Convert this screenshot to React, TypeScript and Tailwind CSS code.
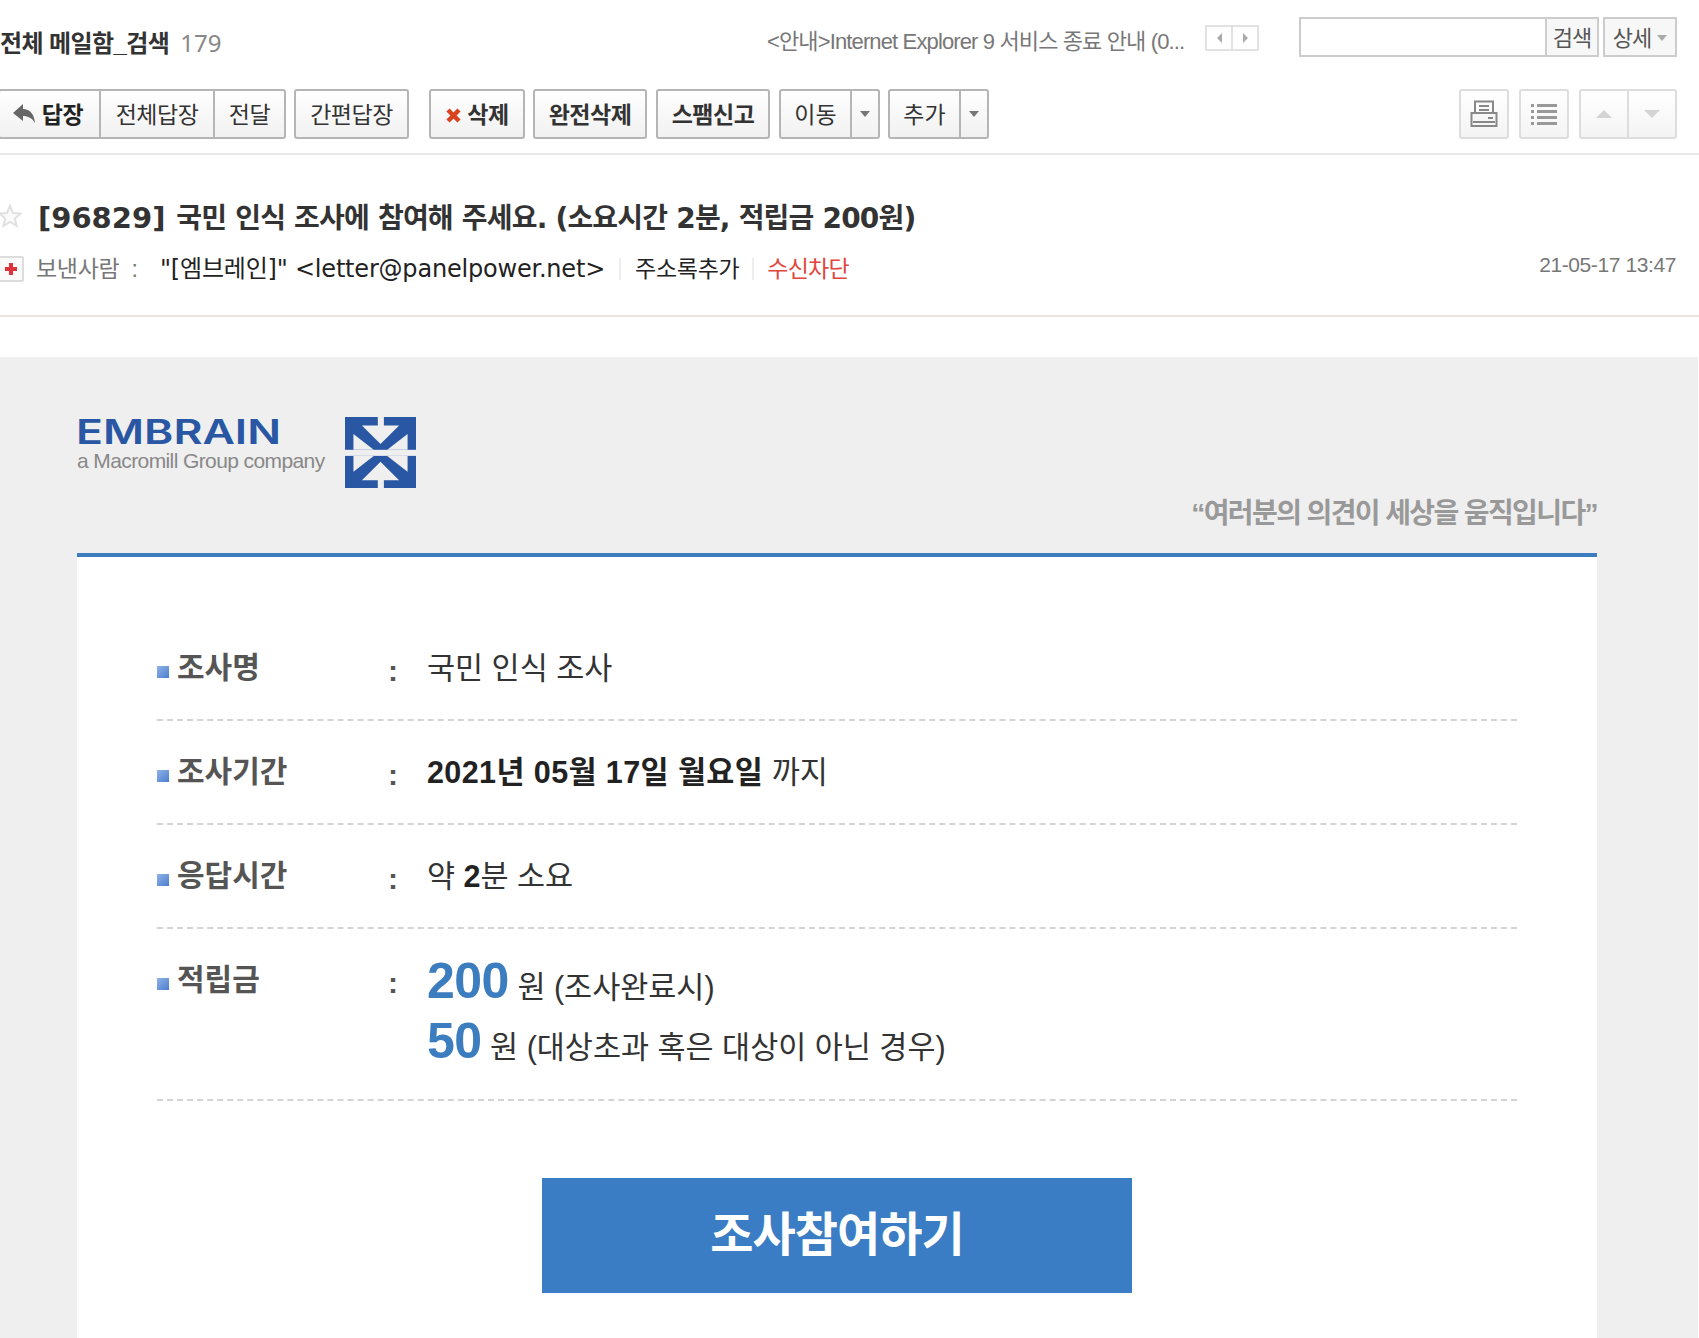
import React from 'react';

const sans = "font-['Liberation_Sans','Noto_Sans_CJK_KR',sans-serif]";

const Caret = ({ className = 'border-t-[#777]' }: { className?: string }) => (
  <span className={`inline-block w-0 h-0 border-x-[5px] border-x-transparent border-t-[6px] ${className}`} />
);

const ToolButton = ({ children, bold, className = '' }: { children: React.ReactNode; bold?: boolean; className?: string }) => (
  <button
    className={`h-[50px] pt-[3px] flex items-center justify-center border-2 border-[#b5b5b5] rounded-[3px] bg-gradient-to-b from-white to-[#f1f1f1] text-[23px] tracking-[-0.5px] text-[#333] ${bold ? 'font-bold text-[#222]' : ''} ${className}`}
  >
    {children}
  </button>
);

const SplitButton = ({ label, mainWidth }: { label: string; mainWidth: string }) => (
  <div className="h-[50px] flex border-2 border-[#b5b5b5] rounded-[3px] bg-gradient-to-b from-white to-[#f1f1f1] text-[23px] text-[#333]">
    <span className={`${mainWidth} pt-[3px] flex items-center justify-center border-r-2 border-[#b5b5b5]`}>{label}</span>
    <span className="w-[26px] flex items-center justify-center"><Caret /></span>
  </div>
);

const Row = ({ label, children, className = '' }: { label: string; children: React.ReactNode; className?: string }) => (
  <div className={`flex border-b-2 border-dashed border-[#d4d4d4] ${className}`}>
    <div className="w-[231px] flex items-start text-[30px] leading-[44px] font-bold text-[#555]">
      <span className="w-3 h-3 mt-[20px] mr-2 bg-gradient-to-br from-[#8fb2e6] to-[#4a7fd0]" />
      {label}
    </div>
    <div className="w-[39px] pt-[3px] text-[30px] leading-[44px] font-bold text-[#555]">:</div>
    <div className="text-[30.5px] leading-[44px] text-[#333]">{children}</div>
  </div>
);

// two mirrored halves: arrow from the edge, wedges either side
const EmbrainMark = () => (
  <svg width="71" height="71" viewBox="0 0 210 210" className="ml-[18px]">
    <rect width="210" height="210" fill="#2957a4" />
    <rect y="97" width="210" height="18" fill="#efefef" />
    <g fill="#efefef">
      <path d="M97 0h18v25h45l-55 55-55-55h47z" />
      <path d="M25 50L85 97H25z" />
      <path d="M185 50L125 97h60z" />
      <path d="M97 212h18v-25h45l-55-55-55 55h47z" />
      <path d="M25 162L85 115H25z" />
      <path d="M185 162L125 115h60z" />
    </g>
  </svg>
);

export default function App() {
  return (
    <div className={`relative w-[1699px] h-[1338px] overflow-hidden bg-white ${sans}`}>
      {/* title row */}
      <div className="h-[89px] flex items-start">
        <div className="w-[767px] pt-[25px] flex items-baseline whitespace-nowrap">
          <span className="text-[24px] font-bold tracking-[-0.6px] text-[#333]">전체 메일함_검색</span>
          <span className="ml-[11px] text-[24px] text-[#888] font-['Noto_Sans',sans-serif]">179</span>
        </div>
        <div className="w-[440px] pt-[25px] text-[22px] text-[#777] tracking-[-0.87px] whitespace-nowrap">
          {'<안내>Internet Explorer 9 서비스 종료 안내 (0...'}
        </div>
        <div className="mt-[25px] ml-[-2px] w-[54px] h-[26px] flex border-2 border-[#e2e2e2] bg-white">
          <span className="flex-1 flex items-center justify-center border-r-2 border-[#e2e2e2]">
            <span className="w-0 h-0 border-y-[5px] border-y-transparent border-r-[5px] border-r-[#aaa]" />
          </span>
          <span className="flex-1 flex items-center justify-center">
            <span className="w-0 h-0 border-y-[5px] border-y-transparent border-l-[5px] border-l-[#aaa]" />
          </span>
        </div>
        <div className="mt-[17px] ml-[40px] w-[300px] h-[40px] flex border-2 border-[#ccc]">
          <div className="w-[244px]" />
          <div className="flex-1 pt-[2px] flex items-center justify-center border-l-2 border-[#ccc] bg-[#f7f7f7] text-[22px] text-[#555] tracking-[-1px]">검색</div>
        </div>
        <div className="mt-[17px] ml-[4px] w-[74px] h-[40px] pt-[2px] flex items-center justify-center gap-[6px] border-2 border-[#ccc] bg-[#f7f7f7] text-[22px] text-[#555] tracking-[-1px]">
          상세 <Caret className="border-t-[#aaa]" />
        </div>
      </div>

      {/* toolbar */}
      <div className="h-[66px] flex items-start border-b-2 border-[#e8e8e8]">
        <div className="ml-[-2px] w-[288px] h-[50px] flex border-2 border-[#b5b5b5] rounded-[3px] bg-gradient-to-b from-white to-[#f1f1f1] text-[23px] tracking-[-0.5px] text-[#333]">
          <span className="w-[101px] pt-[3px] flex items-center justify-center gap-[6px] border-r-2 border-[#b5b5b5] font-bold text-[#222]">
            <svg width="24" height="22" viewBox="0 0 24 22" className="mt-[-4px] ml-[-4px]">
              <path d="M1 10 L11 1 L11 6 C18 6 22 11 23 20 C20 15 16 13 11 13 L11 18 Z" fill="#666" />
            </svg>
            답장
          </span>
          <span className="w-[114px] pt-[3px] flex items-center justify-center border-r-2 border-[#b5b5b5]">전체답장</span>
          <span className="flex-1 pt-[3px] flex items-center justify-center">전달</span>
        </div>
        <ToolButton className="ml-[8px] w-[115px]">간편답장</ToolButton>
        <ToolButton bold className="ml-[20px] w-[96px] gap-[5px]">
          <svg width="17" height="17" viewBox="0 0 17 17"><path d="M3 3 L14 14 M14 3 L3 14" stroke="#d9431e" strokeWidth="4.5" /></svg>
          삭제
        </ToolButton>
        <ToolButton bold className="ml-[8px] w-[114px]">완전삭제</ToolButton>
        <ToolButton bold className="ml-[9px] w-[114px]">스팸신고</ToolButton>
        <div className="ml-[9px]"><SplitButton label="이동" mainWidth="w-[71px]" /></div>
        <div className="ml-[8px]"><SplitButton label="추가" mainWidth="w-[71px]" /></div>
        <div className="ml-auto flex mr-[22px] gap-[10px]">
          <div className="w-[50px] h-[50px] flex items-center justify-center border-2 border-[#ddd] rounded-[3px] bg-gradient-to-b from-white to-[#f4f4f4]">
            <svg width="28" height="28" viewBox="0 0 28 28" fill="none" stroke="#888" strokeWidth="2">
              <rect x="5" y="1.500" width="18" height="15" />
              <path d="M9 6h10M9 10h10" />
              <rect x="1.500" y="13" width="25" height="13" fill="#f6f6f6" />
              <path d="M3 22h22M18 18h5" />
            </svg>
          </div>
          <div className="w-[50px] h-[50px] flex items-center justify-center border-2 border-[#ddd] rounded-[3px] bg-gradient-to-b from-white to-[#f4f4f4]">
            <svg width="26" height="22" viewBox="0 0 26 22" fill="#999">
              <rect x="0" y="1" width="3" height="3" /><rect x="6" y="1" width="20" height="3" />
              <rect x="0" y="7" width="3" height="3" /><rect x="6" y="7" width="20" height="3" />
              <rect x="0" y="13" width="3" height="3" /><rect x="6" y="13" width="20" height="3" />
              <rect x="0" y="19" width="3" height="3" /><rect x="6" y="19" width="20" height="3" />
            </svg>
          </div>
          <div className="w-[98px] h-[50px] flex border-2 border-[#ddd] rounded-[3px] bg-gradient-to-b from-white to-[#f4f4f4]">
            <span className="flex-1 flex items-center justify-center border-r-2 border-[#ddd]">
              <span className="w-0 h-0 border-x-[8px] border-x-transparent border-b-[8px] border-b-[#d4d4d4]" />
            </span>
            <span className="flex-1 flex items-center justify-center">
              <span className="w-0 h-0 border-x-[8px] border-x-transparent border-t-[8px] border-t-[#d4d4d4]" />
            </span>
          </div>
        </div>
      </div>

      {/* subject and sender */}
      <div className="h-[162px] border-b-2 border-[#eee2e2] relative">
        <div className="pt-[42px] flex items-center h-[85px]">
          <svg width="24" height="24" viewBox="0 0 24 24" className="ml-[-2px] mt-[-6px]" fill="#fafafa" stroke="#e0e0e0" strokeWidth="2">
            <path d="M12 2l3 7 7.500.6-5.700 4.900 1.800 7.300L12 18l-6.600 3.800 1.800-7.300L1.500 9.600 9 9z" />
          </svg>
          <span className="ml-[16px] text-[28px] font-bold text-[#333] whitespace-nowrap font-['DejaVu_Sans','Noto_Sans_CJK_KR',sans-serif] tracking-[-0.8px]">
            <span className="text-[29px] tracking-[0px] mr-[2px]">[96829]</span> 국민 인식 조사에 참여해 주세요. (소요시간 2분, 적립금 200원)
          </span>
        </div>
        <div className="mt-[11px] flex items-center whitespace-nowrap">
          <span className="ml-[-2px] w-[26px] h-[26px] flex items-center justify-center border-2 border-[#ddd] rounded-[2px] bg-[#fafafa]">
            <svg width="14" height="14" viewBox="0 0 14 14"><path d="M5 1h4v4h4v4H9v4H5V9H1V5h4z" fill="#e0323c" /></svg>
          </span>
          <span className="ml-[12px] w-[124px] text-[#777] text-[23px] tracking-[-0.3px]">보낸사람&nbsp;&nbsp;:</span>
          <span className="text-[#222] font-['DejaVu_Sans','Noto_Sans_CJK_KR',sans-serif] text-[24px] tracking-[-0.2px]">{'"[엠브레인]" <letter@panelpower.net>'}</span>
          <span className="ml-[14px] h-[22px] border-l-2 border-[#eee]" />
          <span className="ml-[14px] text-[#222] text-[23px] tracking-[-0.3px]">주소록추가</span>
          <span className="ml-[13px] h-[22px] border-l-2 border-[#eee]" />
          <span className="ml-[13px] text-[#e2453c] text-[23px] tracking-[-0.8px]">수신차단</span>
          <span className="ml-auto mr-[23px] mt-[-9px] text-[21px] text-[#777] tracking-[-0.4px]">21-05-17 13:47</span>
        </div>
      </div>

      {/* mail body */}
      <div className="mt-[40px] h-[981px] bg-[#efefef] pl-[77px] pr-[101px] mr-[1px]">
        <div className="h-[196px] pt-[60px] relative">
          <div className="flex items-start">
            <div className="w-[250px]">
              <div className="ml-[-1px] text-[34px] leading-[30px] font-semibold text-[#2957a4] origin-left scale-x-[1.31] font-['Inter',sans-serif] whitespace-nowrap">EMBRAIN</div>
              <div className="mt-[2px] text-[21px] leading-[24px] text-[#888] tracking-[-0.6px] whitespace-nowrap font-['Liberation_Sans',sans-serif]">a Macromill Group company</div>
            </div>
            <EmbrainMark />
          </div>
          <div className="absolute right-0 top-[139px] text-[28px] leading-[36px] font-bold text-[#999] tracking-[-1.6px] whitespace-nowrap">“여러분의 의견이 세상을 움직입니다”</div>
        </div>
        <div className="h-[790px] bg-white border-t-4 border-[#3c7dc0] px-[80px] pt-[89px]">
          <Row label="조사명" className="h-[75px]">국민 인식 조사</Row>
          <Row label="조사기간" className="h-[104px] pt-[29px]"><b className="text-[#222] tracking-[0.4px]">2021년 05월 17일 월요일</b> 까지</Row>
          <Row label="응답시간" className="h-[104px] pt-[29px]">약 <b className="text-[#222]">2</b>분 소요</Row>
          <Row label="적립금" className="h-[172px] pt-[29px]">
            <div className="h-[60px] leading-[56px] mt-[-5px]"><b className="text-[50px] text-[#3c7dc0] tracking-[-0.5px]">200</b> 원 (조사완료시)</div>
            <div className="h-[60px] leading-[56px]"><b className="text-[50px] text-[#3c7dc0] tracking-[-0.5px]">50</b> 원 (대상초과 혹은 대상이 아닌 경우)</div>
          </Row>
          <div className="mt-[77px] ml-[385px] w-[590px] h-[115px] bg-[#3a7dc5] flex items-center justify-center text-white text-[47px] font-bold tracking-[-1px]">조사참여하기</div>
        </div>
      </div>
    </div>
  );
}
